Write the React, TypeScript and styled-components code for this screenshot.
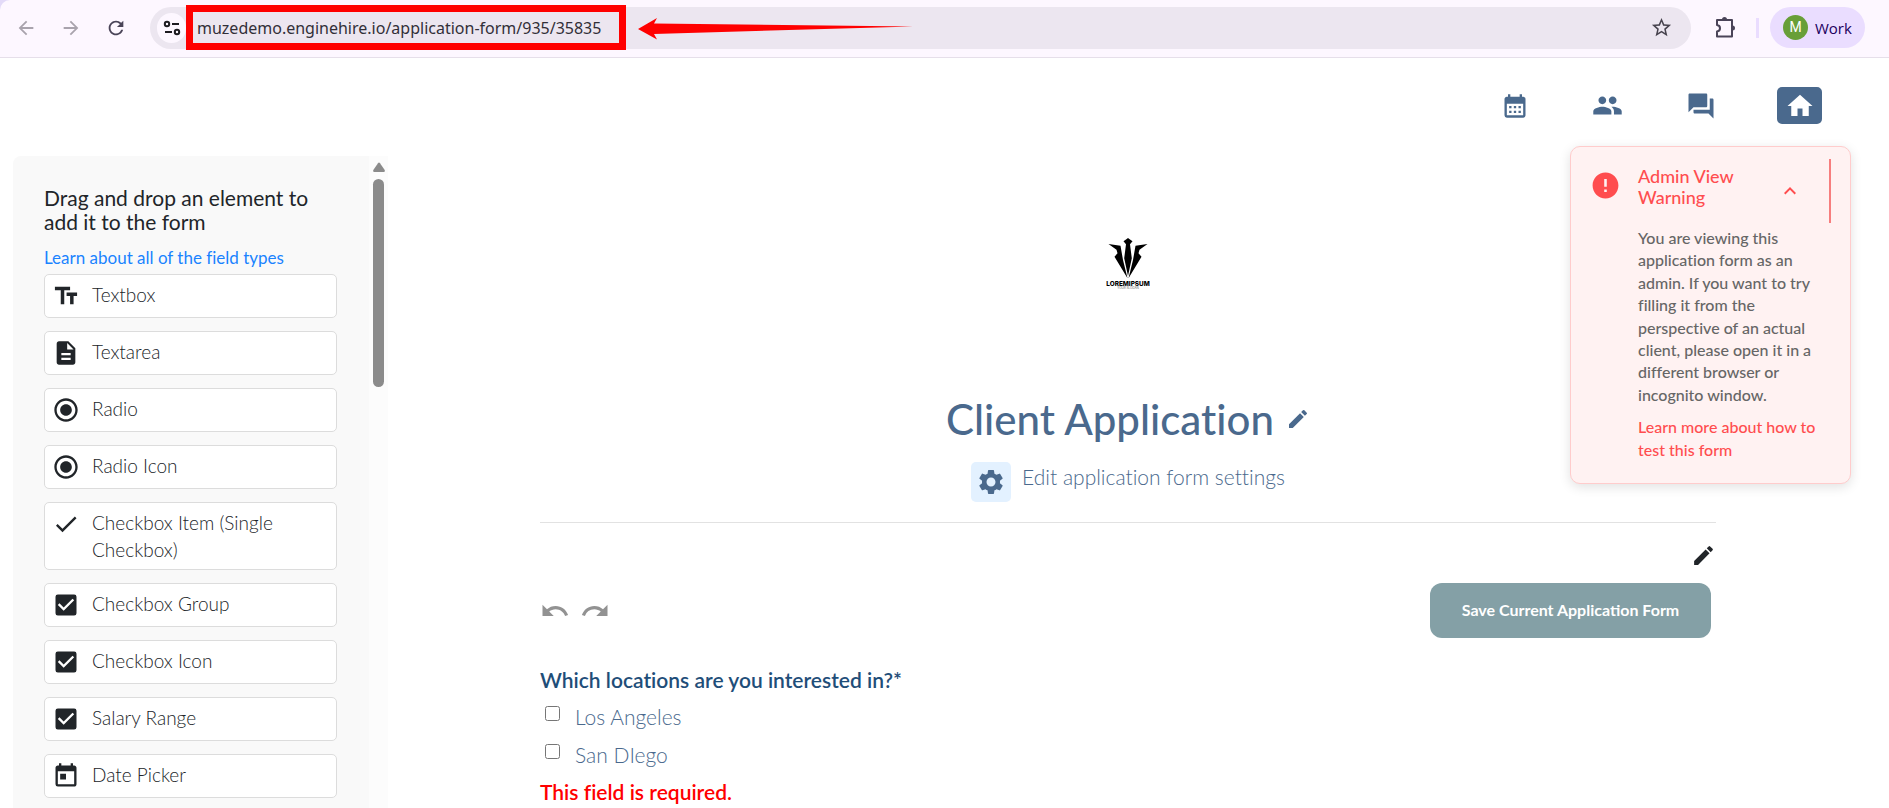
import React from "react";
import styled, { createGlobalStyle } from "styled-components";
import type { IconType } from "react-icons";
import {
  MdArrowBack,
  MdArrowForward,
  MdCalendarMonth,
  MdCheck,
  MdCheckBox,
  MdDescription,
  MdEdit,
  MdError,
  MdHome,
  MdKeyboardArrowUp,
  MdPeople,
  MdQuestionAnswer,
  MdRadioButtonChecked,
  MdRedo,
  MdRefresh,
  MdSettings,
  MdStarBorder,
  MdTextFields,
  MdToday,
  MdUndo,
} from "react-icons/md";

const slate = "#4a698d";
const ink = "#212529";
const red = "#ff4d4f";

const GlobalStyle = createGlobalStyle`
  *, *::before, *::after { box-sizing: border-box; }
  body {
    margin: 0;
    background: #fff;
    color: ${ink};
    font-family: Lato, "Open Sans", sans-serif;
    font-size: 18px;
    font-variant-ligatures: none;
  }
  button {
    border: 0;
    padding: 0;
    background: none;
    font-family: inherit;
    color: inherit;
    cursor: pointer;
  }
  svg { display: block; flex: none; }
  a { text-decoration: none; }
`;

const Shell = styled.div`
  display: flex;
  flex-direction: column;
  height: 100vh;
  overflow: hidden;
  position: relative;
`;

/* Browser toolbar */

const BrowserFrame = styled.div`
  flex: none;
  background: #e3daf8;
`;

const BrowserBar = styled.div`
  display: flex;
  align-items: center;
  height: 58px;
  padding: 0 24px 2px 15px;
  background: #fdf7ff;
  border-bottom: 1px solid #e6dfea;
  border-top-left-radius: 10px;
`;

const BrowserButton = styled.button<{ $muted?: boolean }>`
  display: flex;
  align-items: center;
  justify-content: center;
  width: 22px;
  height: 22px;
  margin-right: 23px;
  color: ${(p) => (p.$muted ? "#a9a3ad" : "#4a4458")};
`;

const Omnibox = styled.div`
  display: flex;
  align-items: center;
  flex: 1;
  height: 42px;
  padding: 0 18px 0 7px;
  border-radius: 21px;
  background: #ece6f0;
  color: #47434e;
`;

const SiteInfo = styled.button`
  display: flex;
  align-items: center;
  justify-content: center;
  width: 29px;
  height: 30px;
  border-radius: 15px;
  background: #fdf7ff;
`;

const AddressHighlight = styled.div`
  flex: none;
  width: 440px;
  height: 45px;
  border: 7px solid #ff0000;
`;

const Address = styled.input`
  width: 100%;
  height: 31px;
  border: 0;
  padding: 0 0 0 4px;
  outline: 0;
  background: transparent;
  color: #322f38;
  font-family: "Noto Sans", "Open Sans", sans-serif;
  font-size: 16px;
`;

const Pointer = styled.svg`
  margin-left: 11px;
`;

const Spacer = styled.div`
  flex: 1;
`;

const Extensions = styled.button`
  margin-left: 23px;
  color: #4a4458;
`;

const BarDivider = styled.span`
  width: 3px;
  height: 20px;
  margin: 0 11px 0 19px;
  background: #eaddff;
`;

const Profile = styled.button`
  display: flex;
  align-items: center;
  gap: 7px;
  width: 95px;
  height: 41px;
  padding-left: 13px;
  border-radius: 21px;
  background: #eaddff;
  color: #21005d;
  font-family: "Open Sans", sans-serif;
  font-size: 15px;
`;

const Avatar = styled.span`
  width: 25px;
  height: 25px;
  border-radius: 50%;
  background: #689f38;
  color: #fff;
  font-family: Roboto, sans-serif;
  font-size: 14px;
  line-height: 25px;
`;

/* Site navigation */

const SiteNav = styled.nav`
  display: flex;
  flex: none;
  justify-content: flex-end;
  gap: 48px;
  height: 98px;
  padding: 29px 67px 0 0;
`;

const NavLink = styled.a<{ $active?: boolean }>`
  display: flex;
  align-items: center;
  justify-content: center;
  width: 45px;
  height: 37px;
  border-radius: 5px;
  margin-left: ${(p) => (p.$active ? 6 : 0)}px;
  background: ${(p) => (p.$active ? slate : "transparent")};
  color: ${(p) => (p.$active ? "#fff" : slate)};
`;

const Body = styled.div`
  display: flex;
  flex: 1;
  min-height: 0;
`;

/* Field palette */

const Sidebar = styled.aside`
  display: flex;
  flex: none;
  width: 375px;
  margin-left: 13px;
  border-top-left-radius: 8px;
  background: #f9f9f9;
  overflow: hidden;
`;

const Palette = styled.div`
  flex: 1;
  padding: 30px 32px 0 31px;
`;

const PaletteTitle = styled.h2`
  margin: 0;
  font-size: 21px;
  font-weight: 400;
  line-height: 24px;
`;

const PaletteLink = styled.a`
  display: block;
  margin: 11px 0 3px;
  color: #1a83ff;
  font-size: 17px;
  line-height: 26px;
`;

const FieldList = styled.ul`
  display: flex;
  flex-direction: column;
  gap: 13px;
  margin: 0;
  padding: 0;
  list-style: none;
`;

const Field = styled.li`
  display: flex;
  gap: 12px;
  min-height: 44px;
  padding: 6px 7px;
  border: 1px solid #dcdcdc;
  border-radius: 5px;
  background: #fff;
  font-weight: 300;
  font-size: 19px;
  line-height: 27px;
  cursor: grab;

  svg { margin-top: 1px; }
`;

const ScrollTrack = styled.div`
  display: flex;
  flex-direction: column;
  align-items: center;
  gap: 7px;
  width: 19px;
  padding-top: 6px;
  background: #fcfcfc;
`;

const ScrollThumb = styled.div`
  width: 11px;
  height: 208px;
  border-radius: 6px;
  background: #8b8b8b;
`;

/* Application form */

const Main = styled.main`
  display: flex;
  flex: 1;
  flex-direction: column;
  padding: 82px 173px 0 152px;
`;

const Brand = styled.svg`
  align-self: center;
`;

const TitleRow = styled.div`
  display: flex;
  align-items: center;
  justify-content: center;
  gap: 12px;
  margin-top: 105px;
  color: ${slate};
`;

const Title = styled.h1`
  margin: 0;
  font-size: 42px;
  font-weight: 500;
  line-height: 48px;
`;

const SettingsLink = styled.a`
  display: flex;
  align-self: center;
  gap: 11px;
  margin-top: 19px;
  color: ${slate};
  font-size: 21px;
  font-weight: 300;
  line-height: 30px;
`;

const SettingsIcon = styled.span`
  display: flex;
  align-items: center;
  justify-content: center;
  width: 40px;
  height: 40px;
  border-radius: 5px;
  background: #e3f1ff;
`;

const Rule = styled.hr`
  width: 100%;
  margin: 20px 0;
  border: 0;
  border-top: 1px solid #e2e2e2;
`;

const EditSection = styled.button`
  align-self: flex-end;
  color: ${ink};
`;

const ActionRow = styled.div`
  display: flex;
  align-items: flex-start;
  gap: 10px;
  margin: 15px 5px 28px 0;
`;

const HistoryButton = styled.button`
  height: 20px;
  margin-top: 13px;
  overflow: hidden;
  color: #929292;
`;

const SaveButton = styled.button`
  width: 281px;
  height: 55px;
  padding-bottom: 2px;
  border-radius: 12px;
  background: #84a0a6;
  color: #fff;
  font-size: 16px;
  font-weight: 700;
`;

const Question = styled.fieldset`
  margin: 0;
  padding: 0;
  border: 0;
`;

const Legend = styled.legend`
  margin-bottom: 4px;
  padding: 0;
  color: #1f4e79;
  font-size: 21px;
  font-weight: 600;
  line-height: 28px;
`;

const Choice = styled.label`
  display: flex;
  gap: 15px;
  padding-left: 5px;
  color: ${slate};
  font-size: 21px;
  font-weight: 300;
  line-height: 38px;
`;

const Tick = styled.input`
  width: 15px;
  height: 15px;
  margin: 8px 0 0;
`;

const FieldError = styled.p`
  margin: 4px 0 0;
  color: #ff0000;
  font-size: 21px;
  font-weight: 600;
  line-height: 28px;
`;

/* Admin notice, floating over the form */

const Notice = styled.section`
  position: absolute;
  top: 146px;
  right: 38px;
  display: grid;
  grid-template-columns: 26px 1fr 31px 2px;
  column-gap: 20px;
  width: 281px;
  padding: 12px 19px 22px 21px;
  border: 1px solid #ffcccc;
  border-radius: 10px;
  background: #fff2f2;
  box-shadow: 0 3px 12px rgba(0, 0, 0, 0.12);
`;

const NoticeIcon = styled.span`
  display: flex;
  align-items: center;
  justify-content: center;
  height: 26px;
  margin-top: 13px;
  color: ${red};
`;

const NoticeTitle = styled.h2`
  margin: 7px 0 0;
  color: ${red};
  font-size: 18px;
  font-weight: 500;
  line-height: 21px;
`;

const Collapse = styled.button`
  height: 64px;
  color: ${red};
`;

const NoticeBar = styled.span`
  background: #f77e7e;
`;

const NoticeBody = styled.div`
  grid-column: 2 / -1;
  margin-right: 6px;
  padding-top: 4px;
  color: #666;
  font-size: 16px;
  font-weight: 500;
  line-height: 1.4;

  p { margin: 0 0 10px; }
  a { display: block; color: ${red}; }
`;

const fields: { label: string; icon: IconType }[] = [
  { label: "Textbox", icon: MdTextFields },
  { label: "Textarea", icon: MdDescription },
  { label: "Radio", icon: MdRadioButtonChecked },
  { label: "Radio Icon", icon: MdRadioButtonChecked },
  { label: "Checkbox Item (Single Checkbox)", icon: MdCheck },
  { label: "Checkbox Group", icon: MdCheckBox },
  { label: "Checkbox Icon", icon: MdCheckBox },
  { label: "Salary Range", icon: MdCheckBox },
  { label: "Date Picker", icon: MdToday },
];

const locations = ["Los Angeles", "San DIego"];

function BrowserToolbar() {
  return (
    <BrowserFrame>
      <BrowserBar>
        <BrowserButton $muted aria-label="Back"><MdArrowBack size={22} /></BrowserButton>
        <BrowserButton $muted aria-label="Forward"><MdArrowForward size={22} /></BrowserButton>
        <BrowserButton aria-label="Reload"><MdRefresh size={22} /></BrowserButton>
        <Omnibox>
          <SiteInfo aria-label="View site information">
            <svg width="18" height="18" viewBox="0 0 18 18" fill="none" stroke="#1d1b20" strokeWidth="2">
              <circle cx="4" cy="5" r="2.2" />
              <path d="M9 5h7M2 13h7" />
              <circle cx="14" cy="13" r="2.2" />
            </svg>
          </SiteInfo>
          <AddressHighlight>
            <Address aria-label="Address" defaultValue="muzedemo.enginehire.io/application-form/935/35835" />
          </AddressHighlight>
          <Pointer width="276" height="24" viewBox="0 0 276 24" fill="#ff0000" aria-hidden="true">
            <path d="M1 13 20 2l-3 5.500L276 10.500 17 18l3 5.500z" />
          </Pointer>
          <Spacer />
          <button aria-label="Bookmark this tab"><MdStarBorder size={23} /></button>
        </Omnibox>
        <Extensions aria-label="Extensions">
          <svg width="23" height="23" viewBox="0 0 23 23" fill="none" stroke="currentColor" strokeWidth="2" strokeLinejoin="round">
            <path d="M3 4h15v16.500H3v-5c4-.6 4-5.900 0-6.500z" />
            <path d="M8 3.500a2.500 2.500 0 0 1 5 0zM18.500 9.500a2.500 2.500 0 0 1 0 5z" fill="currentColor" stroke="none" />
          </svg>
        </Extensions>
        <BarDivider />
        <Profile><Avatar>M</Avatar>Work</Profile>
      </BrowserBar>
    </BrowserFrame>
  );
}

function BrandLogo() {
  return (
    <Brand width="44" height="52" viewBox="0 0 44 52" role="img" aria-label="Lorem Ipsum">
      <path d="M22 0l2 1.500 2.500 1.800L24 6.300l1.800 14L22 38l-3.800-17.700 1.800-14-2.500-3L20 1.500z" />
      <path d="M2.500 6l12 1.700 2.500 14.300 4.500 18.300L8.500 18.700l3-3.400-1-3.500z" />
      <path d="M41.500 6l-12 1.700L27 22l-4.500 18.300 13-21.600-3-3.400 1-3.500z" />
      <text x="22" y="48" textAnchor="middle" fontFamily="Inter, sans-serif" fontWeight="800" fontSize="6.400">LOREMIPSUM</text>
      <text x="22" y="51" textAnchor="middle" fontFamily="Inter, sans-serif" fontSize="3" fill="#666">YOUR SLOGAN</text>
    </Brand>
  );
}

function FieldPalette() {
  return (
    <Sidebar>
      <Palette>
        <PaletteTitle>Drag and drop an element to add it to the form</PaletteTitle>
        <PaletteLink href="#field-types">Learn about all of the field types</PaletteLink>
        <FieldList>
          {fields.map(({ label, icon: Icon }) => (
            <Field key={label} draggable>
              <Icon size={28} />
              {label}
            </Field>
          ))}
        </FieldList>
      </Palette>
      <ScrollTrack>
        <svg width="12" height="10" viewBox="0 0 12 10" fill="#8b8b8b">
          <path d="M5 1.200q1-1.200 2 0l4.700 6.800q.6 2-1 2H1.300q-1.600 0-1-2z" />
        </svg>
        <ScrollThumb />
      </ScrollTrack>
    </Sidebar>
  );
}

function AdminNotice() {
  return (
    <Notice>
      <NoticeIcon><MdError size={31} /></NoticeIcon>
      <NoticeTitle>Admin View Warning</NoticeTitle>
      <Collapse aria-label="Collapse warning"><MdKeyboardArrowUp size={24} /></Collapse>
      <NoticeBar />
      <NoticeBody>
        <p>
          You are viewing this application form as an admin. If you want to try filling it from the
          perspective of an actual client, please open it in a different browser or incognito window.
        </p>
        <a href="#test-form">Learn more about how to test this form</a>
      </NoticeBody>
    </Notice>
  );
}

export default function App() {
  return (
    <>
      <GlobalStyle />
      <Shell>
        <BrowserToolbar />
        <SiteNav>
          <NavLink href="#calendar" aria-label="Calendar"><MdCalendarMonth size={28} /></NavLink>
          <NavLink href="#people" aria-label="People"><MdPeople size={31} /></NavLink>
          <NavLink href="#messages" aria-label="Messages"><MdQuestionAnswer size={30} /></NavLink>
          <NavLink href="#home" aria-label="Home" $active><MdHome size={30} /></NavLink>
        </SiteNav>
        <Body>
          <FieldPalette />
          <Main>
            <BrandLogo />
            <TitleRow>
              <Title>Client Application</Title>
              <button aria-label="Edit title"><MdEdit size={24} /></button>
            </TitleRow>
            <SettingsLink href="#settings">
              <SettingsIcon><MdSettings size={30} /></SettingsIcon>
              Edit application form settings
            </SettingsLink>
            <Rule />
            <EditSection aria-label="Edit section"><MdEdit size={25} /></EditSection>
            <ActionRow>
              <HistoryButton aria-label="Undo"><MdUndo size={30} /></HistoryButton>
              <HistoryButton aria-label="Redo"><MdRedo size={30} /></HistoryButton>
              <Spacer />
              <SaveButton>Save Current Application Form</SaveButton>
            </ActionRow>
            <Question>
              <Legend>Which locations are you interested in?*</Legend>
              {locations.map((name) => (
                <Choice key={name}>
                  <Tick type="checkbox" />
                  {name}
                </Choice>
              ))}
            </Question>
            <FieldError>This field is required.</FieldError>
          </Main>
        </Body>
        <AdminNotice />
      </Shell>
    </>
  );
}
